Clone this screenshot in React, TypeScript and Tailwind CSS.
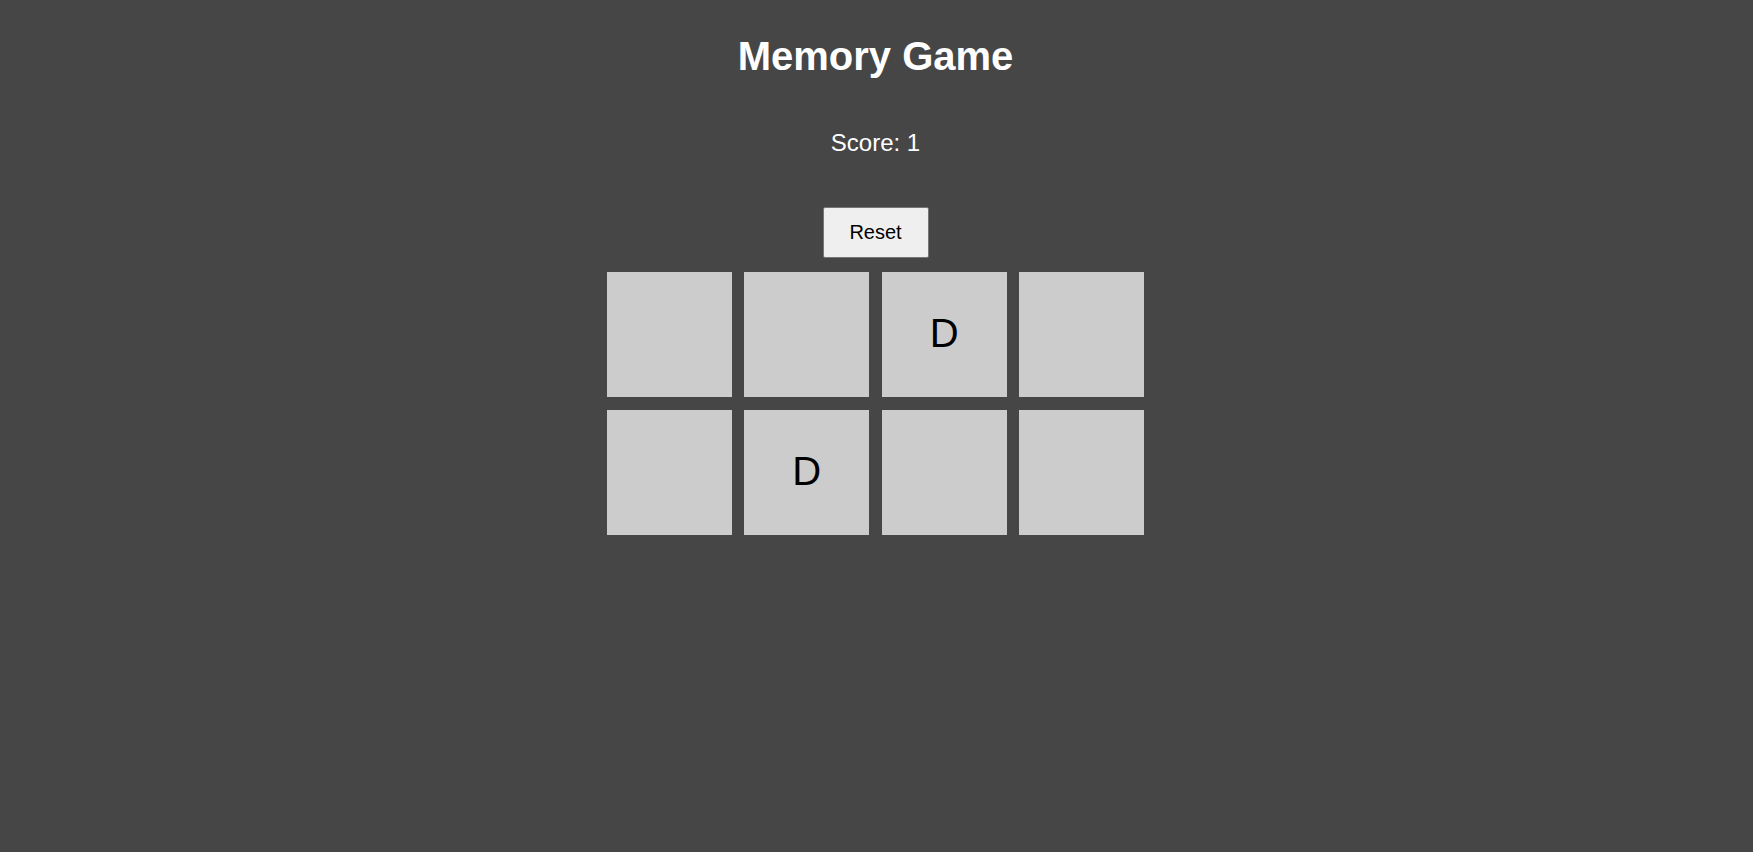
import { useState } from 'react';

const cards = ['', '', 'D', '', '', 'D', '', ''];

export default function App() {
    const [score] = useState(1);

    return (
        <div
            className="min-h-screen w-full bg-[#464646] flex flex-col items-center pr-[2px] text-white"
            style={{ fontFamily: '"Liberation Sans", Arial, sans-serif' }}
        >
            <h1 className="mt-[33px] text-[40px] leading-[46px] font-bold">Memory Game</h1>

            <p className="mt-[50px] text-[24px] leading-[28px]">Score: {score}</p>

            {/* Reset */}
            <button className="mt-[50px] w-[106px] h-[51px] bg-[#efefef] border border-[#767676] rounded-[2px] text-black text-[20px] leading-[23px]">
                Reset
            </button>

            {/* Card grid */}
            <div className="mt-[14px] grid grid-cols-[repeat(4,125px)] gap-[12.5px]">
                {cards.map((c, i) => (
                    <div
                        key={i}
                        className="w-[125px] h-[125px] bg-[#cccccc] flex items-center justify-center pb-[3px] text-black text-[40px]"
                    >
                        {c}
                    </div>
                ))}
            </div>
        </div>
    );
}
